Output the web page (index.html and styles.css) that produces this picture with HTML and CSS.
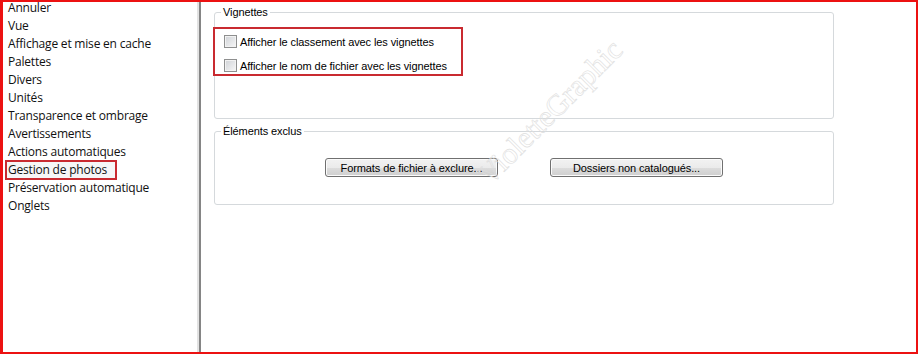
FILE: index.html
```html
<!DOCTYPE html>
<html lang="fr">
<head>
    <meta charset="UTF-8">
    <title>Préférences - Gestion de photos</title>
    <link rel="stylesheet" href="styles.css">
</head>
<body>

<div class="frame">
    <!-- Category list -->
    <ul class="categories">
        <li>Annuler</li>
        <li>Vue</li>
        <li>Affichage et mise en cache</li>
        <li>Palettes</li>
        <li>Divers</li>
        <li>Unités</li>
        <li>Transparence et ombrage</li>
        <li>Avertissements</li>
        <li>Actions automatiques</li>
        <li class="selected">Gestion de photos</li>
        <li>Préservation automatique</li>
        <li>Onglets</li>
    </ul>
    <div class="divider"></div>

    <!-- Settings pane -->
    <div class="pane">
        <fieldset class="group group-thumbs">
            <legend>Vignettes</legend>
            <div class="highlight">
                <label class="option"><input type="checkbox"> Afficher le classement avec les vignettes</label>
                <label class="option"><input type="checkbox"> Afficher le nom de fichier avec les vignettes</label>
            </div>
        </fieldset>

        <fieldset class="group group-excluded">
            <legend>Éléments exclus</legend>
            <div class="buttons">
                <button type="button">Formats de fichier à exclure...</button>
                <button type="button">Dossiers non catalogués...</button>
            </div>
        </fieldset>

        <div class="watermark">VioletteGraphic</div>
    </div>
</div>

</body>
</html>
```

FILE: styles.css
```css
html, body {
    margin: 0;
    padding: 0;
    background: #fff;
}
.frame {
    display: flex;
    width: 918px;
    height: 354px;
    box-sizing: border-box;
    border: 2px solid #ec1111;
    border-left-width: 3px;
    overflow: hidden;
}
.categories {
    list-style: none;
    margin: -3px 0 0 0;
    padding: 0 0 0 5px;
    width: 189px;
    font-family: "Open Sans", "Noto Sans", sans-serif;
    font-size: 12px;
    letter-spacing: -0.2px;
    color: #111;
}
.categories li {
    height: 18px;
    line-height: 18px;
    white-space: nowrap;
}
.categories li.selected {
    width: 108px;
    margin-left: -2px;
    padding-left: 2px;
    background: #f6f6f6;
    outline: 2px solid #c92a30;
    outline-offset: -1px;
}
.divider {
    width: 4px;
    flex: none;
    background: linear-gradient(to right, #e2e2e2 50%, #858585 50%);
}
.pane {
    position: relative;
    flex: 1;
    padding: 4px 0 0 13px;
    font-family: "Liberation Sans", Arial, sans-serif;
    font-size: 11px;
    letter-spacing: -0.1px;
    color: #000;
}
.group {
    width: 620px;
    box-sizing: border-box;
    margin: 0;
    padding: 0;
    border: 1px solid #d5d9dc;
    border-radius: 3px;
}
.group legend {
    margin-left: 6px;
    padding: 0 2px;
    line-height: 13px;
}
.group-thumbs {
    padding-bottom: 42px;
}
.highlight {
    width: 250px;
    box-sizing: border-box;
    margin: 8px 0 0 -2px;
    padding: 6px 0 2px 9px;
    border: 2px solid #c92a30;
    display: flex;
    flex-direction: column;
    gap: 11px;
}
.option {
    display: flex;
    align-items: center;
    gap: 3px;
    height: 13px;
    white-space: nowrap;
}
.option input {
    appearance: none;
    -webkit-appearance: none;
    margin: 0;
    width: 13px;
    height: 13px;
    box-sizing: border-box;
    border: 1px solid #8e8f8f;
    background: linear-gradient(135deg, #cfd2d6, #f7f7f7);
    box-shadow: inset 0 0 0 1px #f2f2f2;
}
.group-excluded {
    margin-top: 6px;
    padding-bottom: 27px;
}
.buttons {
    display: flex;
    justify-content: center;
    gap: 52px;
    margin-top: 20px;
}
.buttons button {
    width: 173px;
    height: 19px;
    padding: 0;
    font-family: "Liberation Sans", Arial, sans-serif;
    font-size: 11px;
    letter-spacing: -0.1px;
    color: #000;
    border: 1px solid #707070;
    border-radius: 3px;
    background: linear-gradient(#f2f2f2 0%, #ebebeb 50%, #dddddd 50%, #cfcfcf 100%);
    box-shadow: inset 0 0 0 1px #fbfbfb;
}
.watermark {
    position: absolute;
    left: 254px;
    top: 93px;
    transform: rotate(-45deg);
    font-family: "Liberation Serif", serif;
    font-size: 30px;
    color: transparent;
    -webkit-text-stroke: 0.6px #dedede;
    white-space: nowrap;
    pointer-events: none;
}
```
